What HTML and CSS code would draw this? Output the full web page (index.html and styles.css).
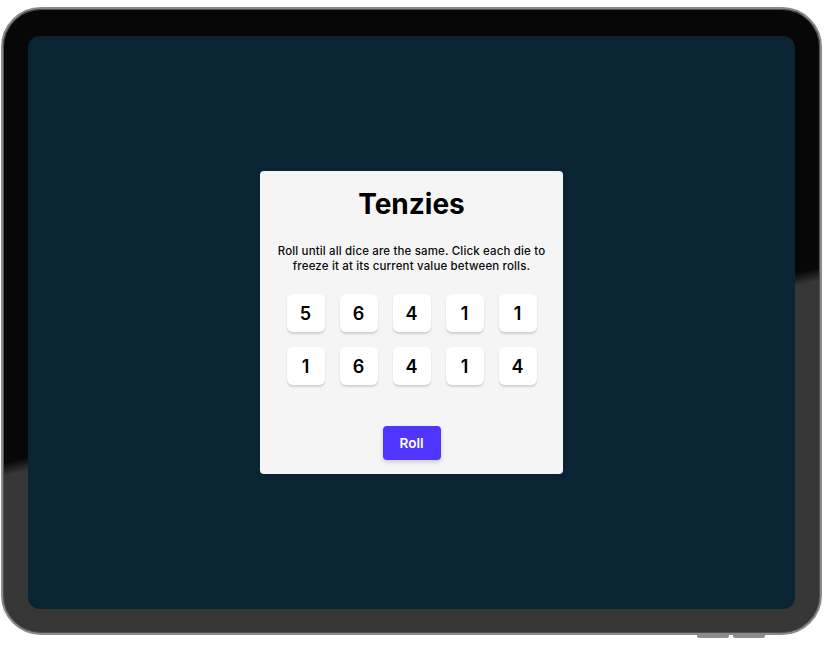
FILE: index.html
```html
<!DOCTYPE html>
<html lang="en">
<head>
<meta charset="utf-8">
<title>Tenzies</title>
<link rel="stylesheet" href="styles.css">
</head>
<body>
<div class="device">
  <div class="screen">
    <main class="card">
      <h1 class="title">Tenzies</h1>
      <p class="instructions">Roll until all dice are the same. Click each die to freeze it at its current value between rolls.</p>
      <div class="dice">
        <button class="die">5</button>
        <button class="die">6</button>
        <button class="die">4</button>
        <button class="die">1</button>
        <button class="die">1</button>
        <button class="die">1</button>
        <button class="die">6</button>
        <button class="die">4</button>
        <button class="die">1</button>
        <button class="die">4</button>
      </div>
      <button class="roll">Roll</button>
    </main>
  </div>
  <div class="hw-buttons">
    <span class="hw-btn"></span>
    <span class="hw-btn"></span>
  </div>
</div>
</body>
</html>
```
FILE: styles.css
```css
html, body {
  margin: 0;
  padding: 0;
  background: #ffffff;
}

body {
  font-family: "Inter", "Liberation Sans", sans-serif;
  padding: 7px 2px 10px 1px;
}

.device {
  position: relative;
  box-sizing: border-box;
  width: 821px;
  height: 628px;
  border: 2px solid #8a8a8a;
  border-radius: 40px;
  box-shadow: inset 0 0 0 1px #505050;
  background: linear-gradient(346.5deg, #363636 43%, #070707 44.6%);
  padding: 27px 25px 24px 25px;
  display: flex;
}

.screen {
  flex: 1;
  background: #0b2434;
  border-radius: 12px;
  display: flex;
  align-items: center;
  justify-content: center;
}

.card {
  box-sizing: border-box;
  width: 303px;
  height: 303px;
  background: #f5f5f5;
  border-radius: 4px;
  display: flex;
  flex-direction: column;
  align-items: center;
  padding: 16px 14px 14px;
}

.title {
  margin: 0;
  font-size: 28px;
  line-height: 34px;
  font-weight: 700;
  color: #000;
  letter-spacing: 0;
}

.instructions {
  margin: 23px 0 0;
  font-size: 11.5px;
  line-height: 15px;
  font-weight: 500;
  color: #0a0a0a;
  text-align: center;
  letter-spacing: 0.15px;
}

.dice {
  margin-top: 20px;
  display: grid;
  grid-template-columns: repeat(5, 38px);
  grid-auto-rows: 38px;
  gap: 15px;
}

.die {
  border: none;
  padding: 0;
  margin: 0;
  background: #ffffff;
  border-radius: 6px;
  box-shadow: 0 2px 2px rgba(0, 0, 0, 0.15);
  font-family: inherit;
  font-size: 18px;
  font-weight: 600;
  color: #000;
  display: flex;
  align-items: center;
  justify-content: center;
}

.roll {
  margin-top: auto;
  width: 58px;
  height: 34px;
  border: none;
  border-radius: 4px;
  background: #5035ff;
  color: #fff;
  font-family: inherit;
  font-size: 13.5px;
  font-weight: 600;
  box-shadow: 0 2px 4px rgba(0, 0, 0, 0.18);
  padding: 0;
}

.hw-buttons {
  position: absolute;
  right: 55px;
  bottom: -5px;
  display: flex;
  gap: 4px;
}

.hw-btn {
  width: 32px;
  height: 3px;
  background: #8c8c8c;
  border-radius: 0 0 2px 2px;
}
```
